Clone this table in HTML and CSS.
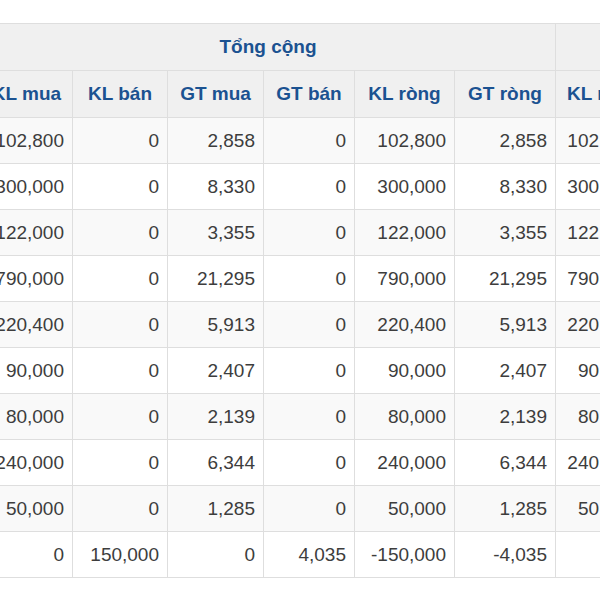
FILE: index.html
```html
<!DOCTYPE html>
<html lang="vi">
<head>
<meta charset="utf-8">
<title>Tổng cộng</title>
<link rel="stylesheet" href="styles.css">
</head>
<body>
<div class="viewport">
<table class="trade">
<colgroup>
<col class="c0"><col class="c1"><col class="c2"><col class="c3"><col class="c4"><col class="c5"><col class="c6"><col class="c7">
</colgroup>
<thead>
<tr class="group"><th colspan="6">Tổng cộng</th><th colspan="2"></th></tr>
<tr class="cols"><th>KL mua</th><th>KL bán</th><th>GT mua</th><th>GT bán</th><th>KL ròng</th><th>GT ròng</th><th class="left">KL mua</th><th></th></tr>
</thead>
<tbody>
<tr><td>102,800</td><td>0</td><td>2,858</td><td>0</td><td>102,800</td><td>2,858</td><td>102,800</td><td></td></tr>
<tr><td>300,000</td><td>0</td><td>8,330</td><td>0</td><td>300,000</td><td>8,330</td><td>300,000</td><td></td></tr>
<tr><td>122,000</td><td>0</td><td>3,355</td><td>0</td><td>122,000</td><td>3,355</td><td>122,000</td><td></td></tr>
<tr><td>790,000</td><td>0</td><td>21,295</td><td>0</td><td>790,000</td><td>21,295</td><td>790,000</td><td></td></tr>
<tr><td>220,400</td><td>0</td><td>5,913</td><td>0</td><td>220,400</td><td>5,913</td><td>220,400</td><td></td></tr>
<tr><td>90,000</td><td>0</td><td>2,407</td><td>0</td><td>90,000</td><td>2,407</td><td>90,000</td><td></td></tr>
<tr><td>80,000</td><td>0</td><td>2,139</td><td>0</td><td>80,000</td><td>2,139</td><td>80,000</td><td></td></tr>
<tr><td>240,000</td><td>0</td><td>6,344</td><td>0</td><td>240,000</td><td>6,344</td><td>240,000</td><td></td></tr>
<tr><td>50,000</td><td>0</td><td>1,285</td><td>0</td><td>50,000</td><td>1,285</td><td>50,000</td><td></td></tr>
<tr><td>0</td><td>150,000</td><td>0</td><td>4,035</td><td>-150,000</td><td>-4,035</td><td></td><td></td></tr>
</tbody>
</table>
</div>
</body>
</html>
```
FILE: styles.css
```css
html, body {
  margin: 0;
  padding: 0;
  background: #ffffff;
}
.viewport {
  width: 600px;
  height: 600px;
  overflow: hidden;
  padding-top: 23px;
  box-sizing: border-box;
}
.trade {
  margin-left: -20px;
  border-collapse: collapse;
  table-layout: fixed;
  width: 780px;
  font-family: "Liberation Sans", Arial, sans-serif;
  font-size: 19px;
  color: #3d3d3d;
}
.c0 { width: 92px; }
.c1 { width: 95px; }
.c2 { width: 96px; }
.c3 { width: 91px; }
.c4 { width: 100px; }
.c5 { width: 101px; }
.c6 { width: 89px; }
.c7 { width: 116px; }
.trade th,
.trade td {
  border: 1px solid #dedede;
  padding: 0 8px;
  white-space: nowrap;
  overflow: hidden;
}
.trade th {
  background: #f0f0f0;
  color: #1b5291;
  font-weight: bold;
  text-align: center;
  height: 46px;
  line-height: 46px;
}
.trade th.left {
  text-align: left;
  padding-left: 11px;
}
.trade td {
  text-align: right;
  height: 45px;
  line-height: 45px;
}
.trade tbody tr:nth-child(odd) td {
  background: #f9f9f9;
}
```
